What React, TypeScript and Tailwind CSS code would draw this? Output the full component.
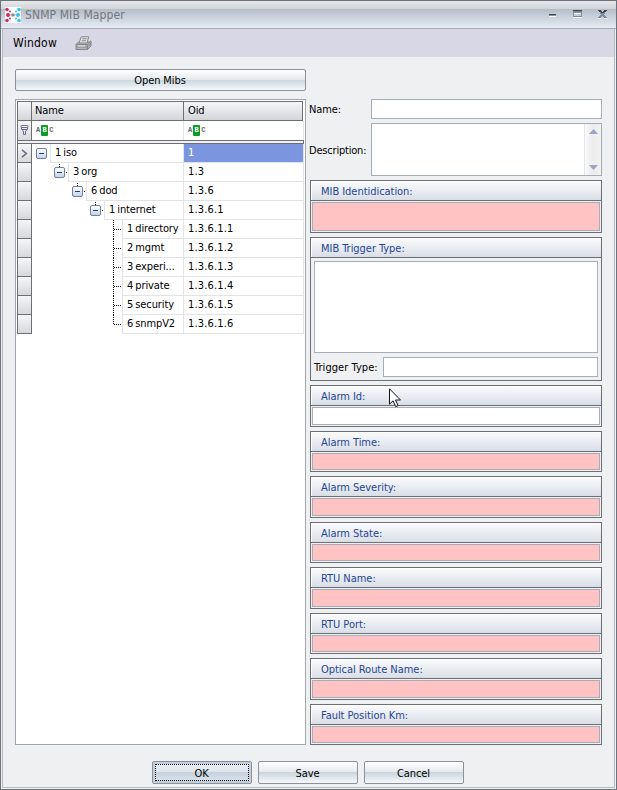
import React from 'react';

interface TreeRow {
  name: string;
  oid: string;
  level: number;
  leaf?: boolean;
}

interface Mapping {
  title: string;
  height: string;
  filled?: boolean;
}

const rows: TreeRow[] = [
  { name: '1 iso', oid: '1', level: 0 },
  { name: '3 org', oid: '1.3', level: 1 },
  { name: '6 dod', oid: '1.3.6', level: 2 },
  { name: '1 internet', oid: '1.3.6.1', level: 3 },
  { name: '1 directory', oid: '1.3.6.1.1', level: 4, leaf: true },
  { name: '2 mgmt', oid: '1.3.6.1.2', level: 4, leaf: true },
  { name: '3 experi...', oid: '1.3.6.1.3', level: 4, leaf: true },
  { name: '4 private', oid: '1.3.6.1.4', level: 4, leaf: true },
  { name: '5 security', oid: '1.3.6.1.5', level: 4, leaf: true },
  { name: '6 snmpV2', oid: '1.3.6.1.6', level: 4, leaf: true },
];

const mappings: Mapping[] = [
  { title: 'Alarm Id:', height: 'h-[42px]', filled: true },
  { title: 'Alarm Time:', height: 'h-[41px]' },
  { title: 'Alarm Severity:', height: 'h-[42px]' },
  { title: 'Alarm State:', height: 'h-[41px]' },
  { title: 'RTU Name:', height: 'h-[42px]' },
  { title: 'RTU Port:', height: 'h-[41px]' },
  { title: 'Optical Route Name:', height: 'h-[42px]' },
  { title: 'Fault Position Km:', height: 'h-[41px]' },
];

const Logo: React.FC = () => (
  <svg width="16" height="16" viewBox="0 0 16 16" className="shrink-0">
    <rect width="16" height="16" fill="#fff" />
    <g fill="#d42a63">
      <circle cx="2" cy="2.5" r="1.8" />
      <circle cx="5" cy="4.4" r="1" />
      <circle cx="3" cy="8" r="2" />
      <circle cx="5" cy="11.6" r="1" />
      <circle cx="2" cy="13.5" r="1.8" />
    </g>
    <circle cx="8" cy="8" r="1.8" fill="#8c8c90" />
    <path d="M5 8h6" stroke="#8c8c90" strokeWidth="0.6" />
    <g fill="#2cc4f5">
      <circle cx="14" cy="2.5" r="1.8" />
      <circle cx="11" cy="4.4" r="1" />
      <circle cx="13" cy="8" r="2" />
      <circle cx="11" cy="11.6" r="1" />
      <circle cx="14" cy="13.5" r="1.8" />
    </g>
  </svg>
);

const Printer: React.FC = () => (
  <svg width="17" height="15" viewBox="0 0 17 15" fill="none" stroke="#85858a">
    <path d="M1 8.5 3.5 6h10.8L16 5v5l-3.5 3.5H1z" fill="#b5b5b8" />
    <path d="M4 7 6.3 .8h7.4L12 7z" fill="#e6e6e8" />
    <path d="M7.3 2.8h4.4M6.6 4.8h4.4" />
    <path d="M1 8.5h11.5v5M12.5 8.5 16 5.5M1 11h11.5M13 10.5l3-3" />
    <path d="M3 10h7" stroke="#ececee" />
  </svg>
);

const WindowButtons: React.FC = () => (
  <svg width="60" height="11" viewBox="0 0 60 11" shapeRendering="crispEdges" className="mt-[2px]">
    <path d="M1 4h7v1H1z" fill="#3f454e" />
    <path d="M1 5h7v1H1z" fill="#8494aa" />
    <path d="M1 6h7v1H1z" fill="#fff" />
    <path d="M25 0h9v1h-9z" fill="#3f454e" />
    <path d="M25 1h9v6h-9zM26 4v2h7V4z" fillRule="evenodd" fill="#7b8ba2" />
    <path d="M26 3h7v1h-7zM25 7h9v1h-9z" fill="#fff" />
    <path d="M50 8h3v1h-3zM56 8h3v1h-3z" fill="#fff" />
    <path d="M50 0h3v1h-3zM56 0h3v1h-3zM51 1h3v1h-3zM55 1h3v1h-3zM53 2h3v1h-3z" fill="#3f454e" />
    <path d="M52 2h1v1h-1zM56 2h1v1h-1zM52 3h5v1h-5zM53 4h3v1h-3zM52 5h5v1h-5zM51 6h3v1h-3zM55 6h3v1h-3zM50 7h3v1h-3zM56 7h3v1h-3z" fill="#7b8ba2" />
  </svg>
);

const FilterIcon: React.FC = () => (
  <svg width="9" height="11" viewBox="0 0 9 11" fill="none" stroke="#6b6b86">
    <rect x="1" y=".5" width="7" height="2" rx=".5" fill="#fff" />
    <path d="M1.5 2.5v2l2 1.5v3.5h2V6l2-1.5v-2M2 4.5h5" />
  </svg>
);

const AbcIcon: React.FC = () => (
  <span className="flex items-center gap-px font-['Liberation_Mono',monospace] text-[7px] leading-none font-bold tracking-normal text-[#66666e]">
    <span>A</span>
    <span className="flex h-[11px] w-[7px] items-center justify-center rounded-[1px] bg-[#0d9b25] text-white">B</span>
    <span>C</span>
  </span>
);

const Toggle: React.FC = () => (
  <span className="flex h-[11px] w-[11px] shrink-0 items-center justify-center rounded-[2px] border border-[#6f819f] bg-linear-to-b from-white to-[#c3d4ea]">
    <span className="h-px w-[5px] bg-[#2a3a5c]" />
  </span>
);

// Dotted connectors drawn in the 18px slot before each cell
const Branch: React.FC<{ row: TreeRow; last: boolean }> = ({ row, last }) => (
  <svg width="18" height="19" viewBox="0 0 18 19" shapeRendering="crispEdges" className="shrink-0" stroke="#000" strokeDasharray="1 1">
    {row.leaf ? (
      <>
        <path d={last ? 'M9.5 0v10' : 'M9.5 0v19'} />
        <path d="M10 9.5h8" />
      </>
    ) : (
      <>
        {row.level > 0 && <path d="M9.5 1v4" />}
        {row.level > 0 && <path d="M16 9.5h2" />}
      </>
    )}
  </svg>
);

const PushButton: React.FC<{ label: string; className: string; focused?: boolean }> = ({ label, className, focused }) => (
  <button
    className={`relative flex items-center justify-center rounded-[2px] border border-[#8b9199] pt-[2px] pr-px ${className} ${
      focused
        ? 'bg-[linear-gradient(#eef2f6,#dde4ea_48%,#c5d1dc_50%,#dfe7ef)] shadow-[inset_0_0_0_2px_#c3cfdf]'
        : 'bg-[linear-gradient(#ffffff,#e4e9ed_48%,#cbd6de_50%,#f5f8fb)]'
    }`}
  >
    {label}
    {focused && <span className="absolute inset-[2px] border border-dotted border-black" />}
  </button>
);

const Group: React.FC<{ title: string; className: string; children: React.ReactNode }> = ({ title, className, children }) => (
  <div className={`flex w-[292px] flex-col border border-[#6c6f73] ${className}`}>
    <div className="flex h-5 shrink-0 items-center border-b border-[#6c6f73] bg-linear-to-b from-[#fbfbfc] to-[#d9dee6] pt-[2px] pl-[10px] tracking-[-0.04px] text-[#1f4596] shadow-[inset_1px_1px_0_#fff]">
      {title}
    </div>
    {children}
  </div>
);

const App: React.FC = () => {
  return (
    <div className="relative flex h-[790px] w-[617px] flex-col overflow-hidden border border-[#6d737c] bg-[#eff0f2] font-['DejaVu_Sans_Condensed','DejaVu_Sans',sans-serif] text-[11px] leading-[14px] tracking-[-0.1px] text-black select-none">
      <div className="flex h-7 shrink-0 items-center justify-between border-b border-[#a3abb6] bg-[linear-gradient(#e9e9ed_0px,#d2d4d7_8px,#b5bdc6_8px,#e6ecf5_27px)] pr-[8px] pl-[4px]">
        <div className="flex items-center gap-[4px]">
          <Logo />
          <span className="text-[12px] tracking-[0.1px] text-[#73777e]">SNMP MIB Mapper</span>
        </div>
        <WindowButtons />
      </div>

      <div className="mx-px mb-px flex grow flex-col border-x border-b border-[#b9b9be]">
        <div className="flex h-7 shrink-0 items-center bg-[#d8d7e5] pl-[10px]">
          <span className="w-[62px] text-[12px] tracking-[0.25px]">Window</span>
          <Printer />
        </div>

        <div className="flex gap-1 pt-3 pl-3">
          <div className="flex w-[291px] flex-col gap-2">
            <PushButton label="Open Mibs" className="h-[22px] w-full" />

            <div className="h-[646px] border border-[#a2a5a9] bg-white p-px">
              <div className="flex h-5 w-[286px] border border-[#6c6f73] bg-linear-to-b from-[#f6f6f8] to-[#d3d5d9]">
                <div className="w-[14px] border-r border-[#6c6f73]" />
                <div className="w-[152px] border-r border-[#6c6f73] pt-[2px] pl-[3px]">Name</div>
                <div className="pt-[2px] pl-[4px]">Oid</div>
              </div>
              <div className="flex h-[19px] w-[287px] border-r border-[#e3e3e5]">
                <div className="flex w-[15px] items-center justify-center border-x border-[#6c6f73] bg-linear-to-b from-[#f6f6f8] to-[#d8dade]">
                  <FilterIcon />
                </div>
                <div className="flex w-[152px] items-center border-r border-[#e3e3e5] pl-[4px]">
                  <AbcIcon />
                </div>
                <div className="flex items-center pl-[4px]">
                  <AbcIcon />
                </div>
              </div>
              <div className="h-1 w-[287px] border border-[#6c6f73] bg-[#f2f2f4]" />

              {rows.map((row, i) => (
                <div key={row.oid} className="flex h-[19px] w-[287px]">
                  <div className="flex w-[15px] shrink-0 items-center justify-center border-x border-b border-[#6c6f73] bg-linear-to-b from-[#f6f6f8] to-[#d6d8dc]">
                    {i === 0 && (
                      <svg width="7" height="9" viewBox="0 0 7 9" fill="none" stroke="#6b6b86" strokeWidth="1.6">
                        <path d="M1 .8 5.3 4.5 1 8.2" />
                      </svg>
                    )}
                  </div>
                  <div className="flex w-[152px] shrink-0">
                    <div className="flex shrink-0" style={{ width: 18 + row.level * 18, paddingLeft: row.level * 18 }}>
                      <div className="relative flex">
                        <Branch row={row} last={i === rows.length - 1} />
                        {!row.leaf && (
                          <div className="absolute top-1 left-1">
                            <Toggle />
                          </div>
                        )}
                      </div>
                    </div>
                    <div className="grow border-x border-b border-[#e3e3e5] pt-[2px] pl-[4px] whitespace-nowrap [word-spacing:-1px]">
                      {row.name}
                    </div>
                  </div>
                  <div
                    className={`grow border-r border-b border-[#e3e3e5] pt-[2px] pl-[4px] tracking-[0.15px] ${i === 0 ? 'bg-[#7b95df] text-white' : ''}`}
                  >
                    {row.oid}
                  </div>
                </div>
              ))}
            </div>
          </div>

          <div className="flex flex-col pt-[30px]">
            <div className="-ml-px flex items-center">
              <label className="w-[62px] pt-[2px]">Name:</label>
              <div className="h-5 w-[231px] border border-[#a5aeb8] bg-white" />
            </div>
            <div className="mt-1 -ml-px flex items-center">
              <label className="w-[62px] pt-[2px] tracking-[-0.2px]">Description:</label>
              <div className="flex h-[53px] w-[231px] justify-end border border-[#a5aeb8] bg-white">
                <div className="flex w-[17px] flex-col items-center justify-between border-l border-[#e6e6e8] bg-linear-to-r from-[#fafafa] via-[#ececec] to-[#f1f1f1] py-[5px]">
                  <svg width="9" height="5" viewBox="0 0 9 5" fill="#9aa5c8">
                    <path d="M4.5 0 9 5H0z" />
                  </svg>
                  <svg width="9" height="5" viewBox="0 0 9 5" fill="#9aa5c8">
                    <path d="M0 0h9L4.5 5z" />
                  </svg>
                </div>
              </div>
            </div>

            <div className="mt-1 flex flex-col gap-1">
              <Group title="MIB Identidication:" className="h-[53px]">
                <div className="m-px grow border border-[#a5aeb8] bg-[#ffc3c3]" />
              </Group>
              <Group title="MIB Trigger Type:" className="h-[144px]">
                <div className="mx-[3px] mt-[3px] h-[92px] border border-[#a5aeb8] bg-white" />
                <div className="mx-[3px] mt-1 flex items-center">
                  <label className="w-[69px] shrink-0 pt-[2px] tracking-[0.05px]">Trigger Type:</label>
                  <div className="h-5 grow border border-[#a5aeb8] bg-white" />
                </div>
              </Group>
              {mappings.map((m) => (
                <Group key={m.title} title={m.title} className={m.height}>
                  <div className={`m-px grow border border-[#a5aeb8] ${m.filled ? 'bg-white' : 'bg-[#ffc3c3]'}`} />
                </Group>
              ))}
            </div>
          </div>
        </div>

        <div className="mt-4 flex gap-[6px] pl-[149px]">
          <PushButton label="OK" className="h-[23px] w-[100px]" focused />
          <PushButton label="Save" className="h-[23px] w-[100px]" />
          <PushButton label="Cancel" className="h-[23px] w-[100px]" />
        </div>
      </div>

      <svg width="13" height="20" viewBox="0 0 13 20" className="absolute top-[387px] left-[388px]">
        <path d="M.5 .8v15.4l3.6-3.4 2.6 5.8 2.4-1-2.6-5.6h5z" fill="#fff" stroke="#111122" />
      </svg>
    </div>
  );
};

export default App;
